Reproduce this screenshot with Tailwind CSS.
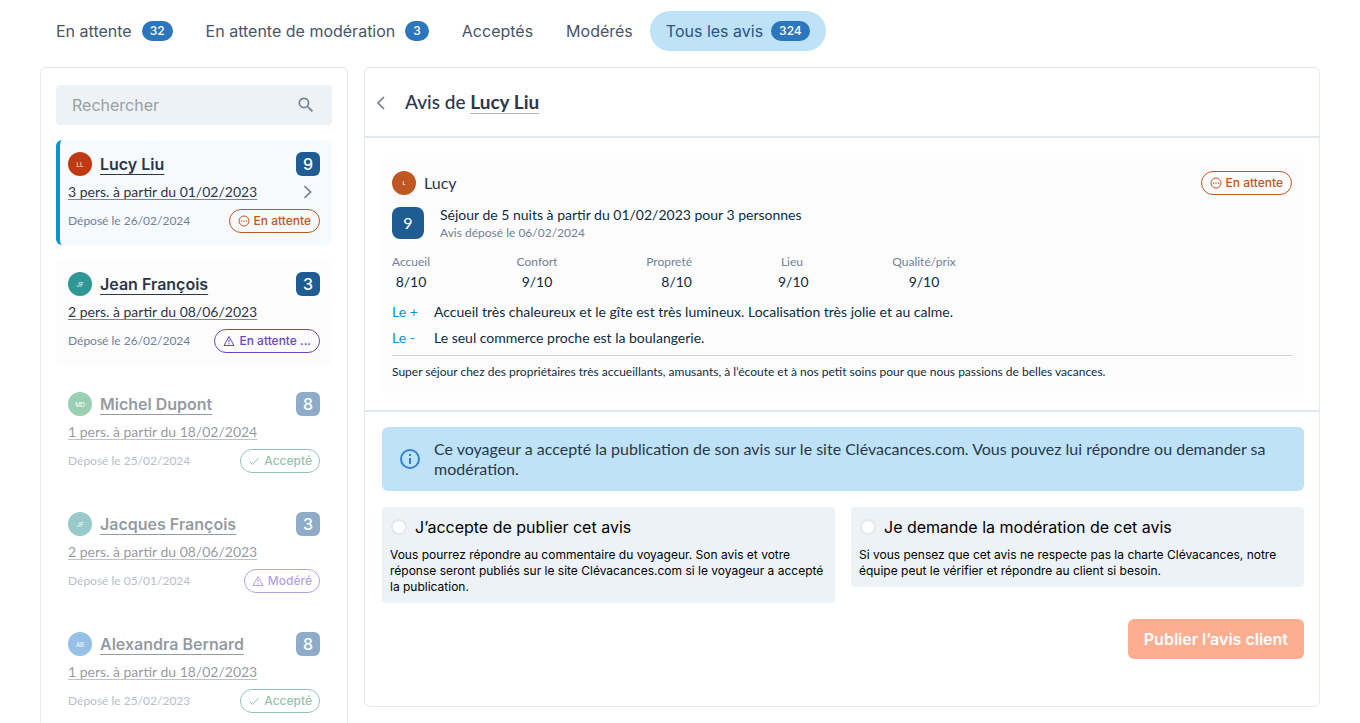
<!DOCTYPE html>
<html lang="fr">
<head>
<meta charset="utf-8">
<meta name="viewport" content="width=device-width, initial-scale=1">
<title>Avis clients</title>
<script src="https://cdn.jsdelivr.net/npm/@tailwindcss/browser@4"></script>
</head>
<body class="bg-white font-['Inter',sans-serif] text-base text-[#2d3748]">
<svg class="hidden" aria-hidden="true">
  <symbol id="dots" viewBox="0 0 12 12"><circle cx="6" cy="6" r="5" fill="none" stroke="currentColor"/><path d="M3 5.5h1.2v1.2H3zM5.4 5.500h1.200v1.200H5.400zM7.800 5.500h1.200v1.200H7.800z" fill="currentColor"/></symbol>
  <symbol id="warn" viewBox="0 0 12 12"><path d="M6 1.500 11 10.500H1zM6 4.500v3M6 8.200v1.200" fill="none" stroke="currentColor"/></symbol>
  <symbol id="check" viewBox="0 0 12 12"><path d="M1.500 6.500 4.500 9.500 10.500 3" fill="none" stroke="currentColor"/></symbol>
</svg>

<nav class="flex gap-px px-10 pt-[11px] text-[#4a5568]" aria-label="Filtres">
  <a href="#" class="flex h-10 items-center gap-2.5 rounded-full px-4">En attente <span class="rounded-full bg-[#2b76bc] px-2 text-xs leading-5 font-medium text-white">32</span></a>
  <a href="#" class="flex h-10 items-center gap-2.5 rounded-full px-4">En attente de modération <span class="rounded-full bg-[#2b76bc] px-2 text-xs leading-5 font-medium text-white">3</span></a>
  <a href="#" class="flex h-10 items-center rounded-full px-4">Acceptés</a>
  <a href="#" class="flex h-10 items-center rounded-full px-4">Modérés</a>
  <a href="#" aria-current="page" class="flex h-10 items-center gap-2 rounded-full bg-[#bee3f8] px-4 text-[#2c5282]">Tous les avis <span class="rounded-full bg-[#2b76bc] px-2 text-xs leading-5 font-medium text-white">324</span></a>
</nav>

<div class="flex items-start gap-4 px-10 pt-4">
  <aside class="flex w-[308px] shrink-0 flex-col gap-[15px] rounded-md border border-[#e2e8f0] px-[15px] pt-[17px] pb-4">
    <label class="flex h-10 items-center rounded bg-[#edf2f7] pr-4 pl-4">
      <input type="search" aria-label="Rechercher" placeholder="Rechercher" class="min-w-0 flex-1 bg-transparent outline-none placeholder:text-[#9a9ea3]">
      <svg class="size-5 text-[#718096]" viewBox="0 0 24 24" fill="currentColor"><path d="M15.500 14h-.79l-.28-.27A6.470 6.470 0 0 0 16 9.500 6.500 6.500 0 1 0 9.500 16c1.610 0 3.090-.59 4.230-1.570l.27.28v.79l5 4.990L20.490 19zm-6 0a4.500 4.500 0 1 1 0-9 4.500 4.500 0 0 1 0 9z"/></svg>
    </label>

    <article class="rounded-md border-l-4 border-[#0694d7] bg-[#f7fafc] py-3 pr-3 pl-2">
      <div class="flex h-6 items-center gap-2">
        <span class="flex size-6 items-center justify-center rounded-full bg-[#bf3a12] text-[6px] text-white">LL</span>
        <a href="#" class="flex-1 font-semibold underline decoration-1 underline-offset-4 [text-decoration-skip-ink:none]">Lucy Liu</a>
        <span class="w-6 rounded-md bg-[#1f5c93] text-center leading-6 font-medium text-white">9</span>
      </div>
      <div class="mt-1 flex h-6 items-center justify-between font-['Lato',sans-serif] text-sm">
        <a href="#" class="underline decoration-[#2d3748]/60 underline-offset-2 [text-decoration-skip-ink:none]">3 pers. à partir du 01/02/2023</a>
        <svg class="size-6 text-[#718096]" viewBox="0 0 24 24" fill="none" stroke="currentColor" stroke-width="1.7"><path d="m8.500 6 6 6-6 6"/></svg>
      </div>
      <div class="mt-[5px] flex items-center justify-between">
        <span class="font-['Lato',sans-serif] text-xs text-[#718096]">Déposé le 26/02/2024</span>
        <span class="flex h-6 items-center gap-1 rounded-full border border-[#c05621] px-2 text-xs font-medium text-[#c05621]"><svg class="size-3"><use href="#dots"/></svg>En attente</span>
      </div>
    </article>

    <article class="rounded-md bg-[#fcfcfc] p-3">
      <div class="flex h-6 items-center gap-2">
        <span class="flex size-6 items-center justify-center rounded-full bg-[#319795] text-[6px] text-white">JF</span>
        <a href="#" class="flex-1 font-semibold underline decoration-1 underline-offset-4 [text-decoration-skip-ink:none]">Jean François</a>
        <span class="w-6 rounded-md bg-[#1f5c93] text-center leading-6 font-medium text-white">3</span>
      </div>
      <div class="mt-1 flex h-6 items-center font-['Lato',sans-serif] text-sm">
        <a href="#" class="underline decoration-[#2d3748]/60 underline-offset-2 [text-decoration-skip-ink:none]">2 pers. à partir du 08/06/2023</a>
      </div>
      <div class="mt-[5px] flex items-center justify-between">
        <span class="font-['Lato',sans-serif] text-xs text-[#718096]">Déposé le 26/02/2024</span>
        <span class="flex h-6 items-center gap-1 rounded-full border border-[#6b46c1] px-2 text-xs font-medium text-[#6b46c1]"><svg class="size-3"><use href="#warn"/></svg>En attente ...</span>
      </div>
    </article>

    <article class="rounded-md p-3 opacity-50">
      <div class="flex h-6 items-center gap-2">
        <span class="flex size-6 items-center justify-center rounded-full bg-[#38a169] text-[6px] text-white">MD</span>
        <a href="#" class="flex-1 font-semibold underline decoration-1 underline-offset-4 [text-decoration-skip-ink:none]">Michel Dupont</a>
        <span class="w-6 rounded-md bg-[#1f5c93] text-center leading-6 font-medium text-white">8</span>
      </div>
      <div class="mt-1 flex h-6 items-center font-['Lato',sans-serif] text-sm">
        <a href="#" class="underline decoration-[#2d3748]/60 underline-offset-2 [text-decoration-skip-ink:none]">1 pers. à partir du 18/02/2024</a>
      </div>
      <div class="mt-[5px] flex items-center justify-between">
        <span class="font-['Lato',sans-serif] text-xs text-[#718096]">Déposé le 25/02/2024</span>
        <span class="flex h-6 items-center gap-1 rounded-full border border-[#2f855a] px-[7px] text-xs font-medium text-[#2f855a]"><svg class="size-3"><use href="#check"/></svg>Accepté</span>
      </div>
    </article>

    <article class="rounded-md p-3 opacity-50">
      <div class="flex h-6 items-center gap-2">
        <span class="flex size-6 items-center justify-center rounded-full bg-[#319795] text-[6px] text-white">JF</span>
        <a href="#" class="flex-1 font-semibold underline decoration-1 underline-offset-4 [text-decoration-skip-ink:none]">Jacques François</a>
        <span class="w-6 rounded-md bg-[#1f5c93] text-center leading-6 font-medium text-white">3</span>
      </div>
      <div class="mt-1 flex h-6 items-center font-['Lato',sans-serif] text-sm">
        <a href="#" class="underline decoration-[#2d3748]/60 underline-offset-2 [text-decoration-skip-ink:none]">2 pers. à partir du 08/06/2023</a>
      </div>
      <div class="mt-[5px] flex items-center justify-between">
        <span class="font-['Lato',sans-serif] text-xs text-[#718096]">Déposé le 05/01/2024</span>
        <span class="flex h-6 items-center gap-1 rounded-full border border-[#6b46c1] px-[7px] text-xs font-medium text-[#6b46c1]"><svg class="size-3"><use href="#warn"/></svg>Modéré</span>
      </div>
    </article>

    <article class="rounded-md p-3 opacity-50">
      <div class="flex h-6 items-center gap-2">
        <span class="flex size-6 items-center justify-center rounded-full bg-[#3182ce] text-[6px] text-white">AB</span>
        <a href="#" class="flex-1 font-semibold underline decoration-1 underline-offset-4 [text-decoration-skip-ink:none]">Alexandra Bernard</a>
        <span class="w-6 rounded-md bg-[#1f5c93] text-center leading-6 font-medium text-white">8</span>
      </div>
      <div class="mt-1 flex h-6 items-center font-['Lato',sans-serif] text-sm">
        <a href="#" class="underline decoration-[#2d3748]/60 underline-offset-2 [text-decoration-skip-ink:none]">1 pers. à partir du 18/02/2023</a>
      </div>
      <div class="mt-[5px] flex items-center justify-between">
        <span class="font-['Lato',sans-serif] text-xs text-[#718096]">Déposé le 25/02/2023</span>
        <span class="flex h-6 items-center gap-1 rounded-full border border-[#2f855a] px-[7px] text-xs font-medium text-[#2f855a]"><svg class="size-3"><use href="#check"/></svg>Accepté</span>
      </div>
    </article>
  </aside>

  <main class="min-w-0 flex-1 rounded-md border border-[#e2e8f0] pb-[47px]">
    <header class="flex h-[70px] items-center gap-3 border-b-2 border-[#e2e8f0] px-1">
      <button type="button" aria-label="Retour" class="text-[#718096]"><svg class="size-6" viewBox="0 0 24 24" fill="none" stroke="currentColor" stroke-width="1.7"><path d="m15 7-6 6 6 6"/></svg></button>
      <h1 class="font-['Lato',sans-serif] text-[19px] font-medium">Avis de <a href="#" class="font-bold underline decoration-[#2d3748]/40 underline-offset-4 [text-decoration-skip-ink:none]">Lucy Liu</a></h1>
    </header>

    <section class="border-b-2 border-[#e2e8f0] px-[15px] pt-[21px] pb-[17px]">
      <article class="rounded-md bg-[#fcfcfc] p-3 font-['Lato',sans-serif] text-sm text-[#0c2d3f]">
        <div class="flex h-6 items-center gap-2">
          <span class="flex size-6 items-center justify-center rounded-full bg-[#c05621] text-[6px] text-white">L</span>
          <span class="flex-1 text-base text-[#2d3748]">Lucy</span>
          <span class="flex h-6 items-center gap-1 rounded-full border border-[#c05621] px-2 font-['Inter',sans-serif] text-xs font-medium text-[#c05621]"><svg class="size-3"><use href="#dots"/></svg>En attente</span>
        </div>
        <div class="mt-2.5 flex items-center gap-4">
          <span class="w-8 rounded-lg bg-[#1f5c93] text-center text-base leading-8 text-white">9</span>
          <div>
            <p class="leading-5">Séjour de 5 nuits à partir du 01/02/2023 pour 3 personnes</p>
            <p class="text-xs">
              <span class="text-[#718096]">Avis déposé le 06/02/2024</span>
            </p>
          </div>
        </div>
        <dl class="mt-[11px] flex gap-[86px] text-center whitespace-nowrap">
          <div class="w-[38px]"><dt class="text-xs leading-5 text-[#718096]">Accueil</dt><dd>8/10</dd></div>
          <div class="w-[42px]"><dt class="text-xs leading-5 text-[#718096]">Confort</dt><dd>9/10</dd></div>
          <div class="w-12 text-right"><dt class="text-xs leading-5 text-[#718096]">Propreté</dt><dd>8/10</dd></div>
          <div class="w-7"><dt class="text-xs leading-5 text-[#718096]">Lieu</dt><dd>9/10</dd></div>
          <div class="w-16"><dt class="text-xs leading-5 text-[#718096]">Qualité/prix</dt><dd>9/10</dd></div>
        </dl>
        <dl class="mt-2.5 grid grid-cols-[42px_1fr] gap-y-[6px]">
          <dt class="text-[#0694d7]">Le +</dt><dd>Accueil très chaleureux et le gîte est très lumineux. Localisation très jolie et au calme.</dd>
          <dt class="text-[#0694d7]">Le -</dt><dd>Le seul commerce proche est la boulangerie.</dd>
        </dl>
        <p class="mt-[7px] border-t border-[#cbd5d8] pt-2 pb-px text-xs">Super séjour chez des propriétaires très accueillants, amusants, à l’écoute et à nos petit soins pour que nous passions de belles vacances.</p>
      </article>
    </section>

    <form class="px-[15px] pt-[15px] pl-[17px]">
      <p class="flex items-center gap-3 rounded-md bg-[#bee3f8] px-4 py-3 font-['Lato',sans-serif] leading-5">
        <svg class="size-6 shrink-0 text-[#3182ce]" viewBox="0 0 24 24" fill="currentColor"><path d="M11 7h2v2h-2zm0 4h2v6h-2zm1-9a10 10 0 1 0 0 20 10 10 0 0 0 0-20zm0 18a8 8 0 1 1 0-16 8 8 0 0 1 0 16z"/></svg>
        <span>Ce voyageur a accepté la publication de son avis sur le site Clévacances.com. Vous pouvez lui répondre ou demander sa modération.</span>
      </p>
      <div class="mt-4 grid grid-cols-2 items-start gap-4 text-black">
        <label class="block rounded bg-[#edf2f7] p-2">
          <span class="flex h-6 items-center gap-2 pl-px"><input type="radio" name="choix" class="size-4 appearance-none rounded-full border-2 border-[#e2e8f0] bg-white checked:border-[5px] checked:border-[#3182ce]">J’accepte de publier cet avis</span>
          <span class="mt-2 block text-xs">Vous pourrez répondre au commentaire du voyageur. Son avis et votre réponse seront publiés sur le site Clévacances.com si le voyageur a accepté la publication.</span>
        </label>
        <label class="block rounded bg-[#edf2f7] p-2">
          <span class="flex h-6 items-center gap-2 pl-px"><input type="radio" name="choix" class="size-4 appearance-none rounded-full border-2 border-[#e2e8f0] bg-white checked:border-[5px] checked:border-[#3182ce]">Je demande la modération de cet avis</span>
          <span class="mt-2 block text-xs">Si vous pensez que cet avis ne respecte pas la charte Clévacances, notre équipe peut le vérifier et répondre au client si besoin.</span>
        </label>
      </div>
      <div class="mt-4 flex justify-end">
        <button type="button" class="h-10 rounded-md bg-[#fdae91] px-4 font-semibold text-white">Publier l’avis client</button>
      </div>
    </form>
  </main>
</div>
</body>
</html>
